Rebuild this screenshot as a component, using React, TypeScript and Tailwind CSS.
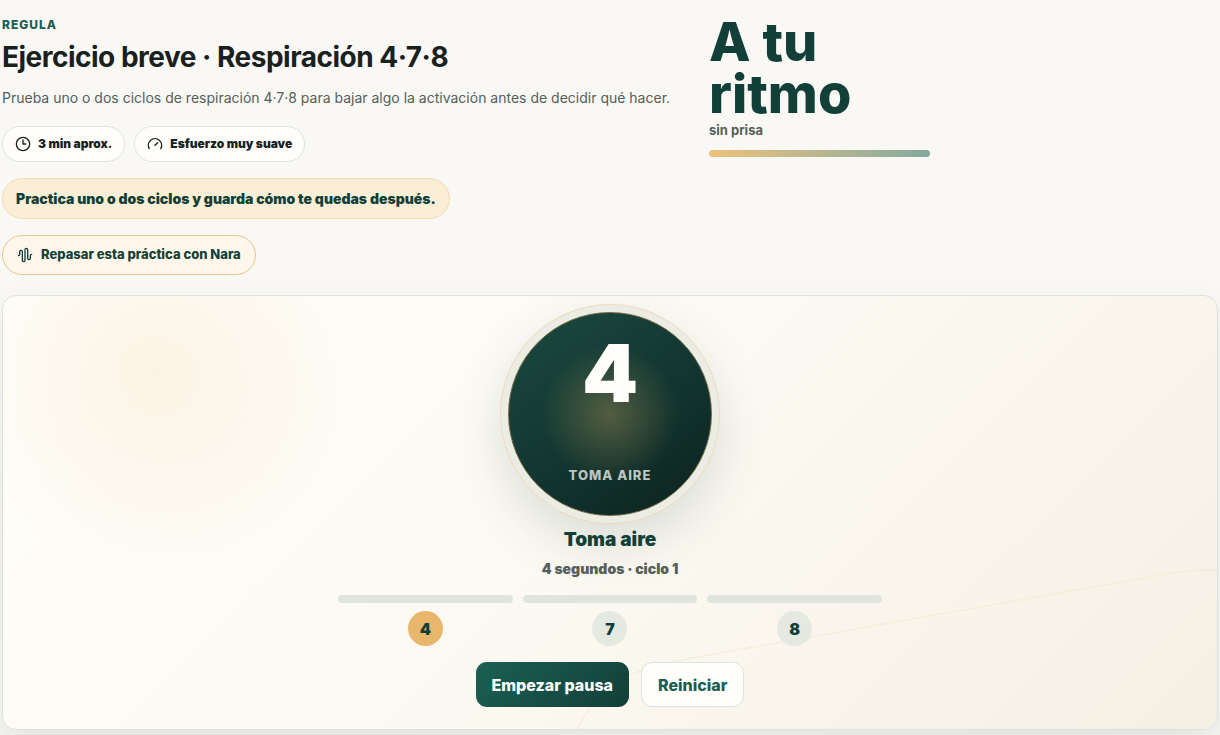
import React from 'react';
import { AudioWaveform, Clock3, Gauge } from 'lucide-react';

const STEPS = [
  { seconds: 4, active: true },
  { seconds: 7, active: false },
  { seconds: 8, active: false },
];

const Chip: React.FC<{ icon: React.ReactNode; label: string }> = ({ icon, label }) => (
  <li className="flex h-9 items-center gap-[7px] rounded-full border border-[#dfe3de] bg-[#fffefb] px-3 text-[12px] font-black text-[#18211e]">
    {icon}
    {label}
  </li>
);

const Header: React.FC = () => (
  <header className="flex items-start gap-[39px]">
    <div className="flex flex-col items-start">
      <p className="text-[12px] leading-[18px] font-extrabold tracking-[1px] text-[#1b5e50]">REGULA</p>
      <h1 className="mt-[6px] text-[28px] leading-[34px] font-bold tracking-[-0.5px] text-[#18211e]">
        Ejercicio breve · Respiración 4·7·8
      </h1>
      <p className="mt-3 text-[14px] leading-6 text-[#53605b]">
        Prueba uno o dos ciclos de respiración 4·7·8 para bajar algo la activación antes de decidir qué hacer.
      </p>
      <ul className="mt-4 flex gap-[9px]">
        <Chip icon={<Clock3 size={16} />} label="3 min aprox." />
        <Chip icon={<Gauge size={16} />} label="Esfuerzo muy suave" />
      </ul>
      <p className="mt-4 rounded-full border border-[#f2dcb0] bg-[#fbeed7] px-[13px] py-2 text-[14px] leading-[23px] font-black text-[#123f38]">
        Practica uno o dos ciclos y guarda cómo te quedas después.
      </p>
      <button
        type="button"
        className="mt-4 flex h-10 items-center gap-2 rounded-full border border-[#e3c88f] bg-[#fff7ec] px-[14px] text-[13px] font-extrabold text-[#123f38]"
      >
        <AudioWaveform size={16} />
        Repasar esta práctica con Nara
      </button>
    </div>

    <div className="w-[221px]">
      <p className="text-[54px] leading-[52px] font-extrabold text-[#123f38]">
        A tu
        <br />
        ritmo
      </p>
      <p className="text-[13px] leading-5 font-bold text-[#53605b]">sin prisa</p>
      <div className="mt-[10px] h-[7px] rounded-full bg-linear-to-r from-[#edc17a] to-[#84a99f]" />
    </div>
  </header>
);

const BreathOrb: React.FC = () => (
  <div className="flex size-[220px] items-center justify-center rounded-full border border-[#eddcb8] bg-[#ebece4] shadow-[0_20px_50px_rgba(18,63,56,0.14)]">
    <div className="flex size-[204px] flex-col items-center rounded-full border border-[#756a45] bg-[radial-gradient(circle_at_center,rgba(232,181,99,0.3),transparent_48%),linear-gradient(145deg,#1b4a40,#123530_55%,#0d221e)] pt-5">
      <span className="text-[80px] leading-[80px] font-black text-[#fffefb]">4</span>
      <span className="mt-[52px] text-[13px] leading-5 font-extrabold tracking-[1px] text-[#bcc6c1]">TOMA AIRE</span>
    </div>
  </div>
);

const BreathPanel: React.FC = () => (
  <section className="relative mt-5 overflow-hidden rounded-[14px] border border-[#dde1dc] bg-[radial-gradient(circle_at_150px_75px,rgba(232,181,99,0.13),transparent_200px),linear-gradient(135deg,#fffefa,#fcf9f2_50%,#f5f0e4)] pt-2 pb-[22px] shadow-[0_20px_40px_rgba(18,63,56,0.1)]">
    {/* Faint contour line behind the content */}
    <svg
      className="absolute right-0 bottom-0 h-[160px] w-[640px]"
      viewBox="0 0 640 160"
      fill="none"
      stroke="#f4ead4"
      aria-hidden="true"
    >
      <path d="M0 160 Q16 128 42 112 Q64 98 120 88 L590 5 Q612 1 640 1" />
    </svg>

    <div className="relative flex flex-col items-center">
      <BreathOrb />
      <h2 className="text-[19px] leading-8 font-black text-[#123f38]">Toma aire</h2>
      <p className="text-[14px] leading-[26px] font-black text-[#53605b]">4 segundos · ciclo 1</p>

      <ol className="mt-[13px] grid w-full max-w-[544px] grid-cols-3 gap-[10px]">
        {STEPS.map((step) => (
          <li key={step.seconds} className="flex flex-col items-center gap-2">
            <span className="h-2 w-full rounded-full bg-[#dfe4dd]" />
            <span
              className={`flex size-[35px] items-center justify-center rounded-full text-[16px] font-black text-[#123f38] ${
                step.active ? 'bg-[#e8b76b]' : 'bg-[#e6e9e1]'
              }`}
            >
              {step.seconds}
            </span>
          </li>
        ))}
      </ol>

      <div className="mt-4 flex gap-3">
        <button
          type="button"
          className="h-[45px] rounded-[11px] bg-[linear-gradient(135deg,#1b6054,#123f38)] px-4 text-[16px] font-extrabold text-[#fffefb]"
        >
          Empezar pausa
        </button>
        <button
          type="button"
          className="h-[45px] rounded-[11px] border border-[#dfe3de] bg-[#fffefb] px-4 text-[16px] font-extrabold text-[#1b5e50]"
        >
          Reiniciar
        </button>
      </div>
    </div>
  </section>
);

const App: React.FC = () => (
  <main className="min-h-screen bg-[#faf8f4] px-[2px] pt-4 font-['Inter',sans-serif]">
    <Header />
    <BreathPanel />
  </main>
);

export default App;
